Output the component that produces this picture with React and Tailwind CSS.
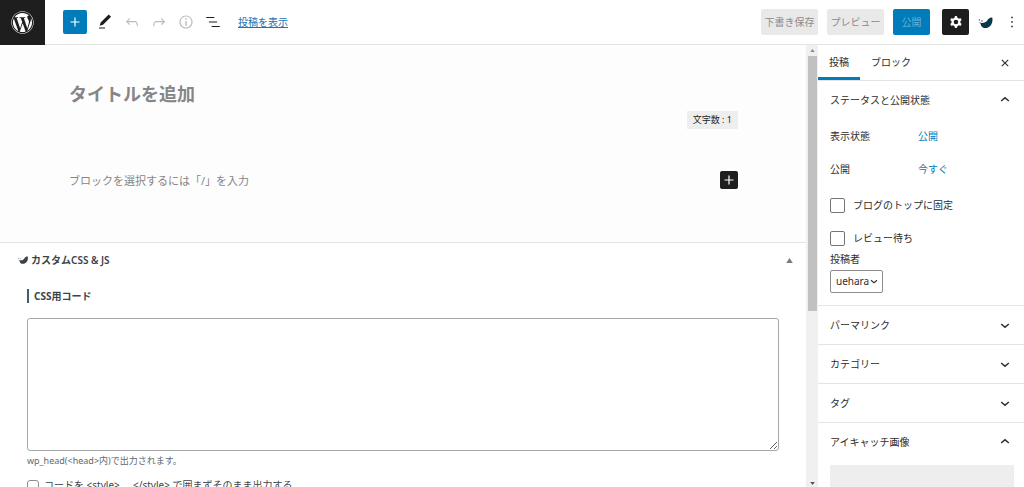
import { FaWordpress } from "react-icons/fa";

const paths = {
  plus: "M18 11.2h-5.2V6h-1.6v5.2H6v1.6h5.2V18h1.6v-5.2H18z",
  edit: "M20.1 5.1L16.9 2 6.2 12.7l-1.3 4.4 4.5-1.3L20.1 5.1zM4 20.8h8v-1.5H4v1.5z",
  undo: "M18.3 11.7c-.6-.6-1.4-.9-2.3-.9H6.7l2.9-3.3-1.1-1-4.5 5L8.5 16l1-1-2.7-2.7H16c.5 0 .9.2 1.3.5 1 1 1 3.4 1 4.5v.3h1.5v-.2c0-1.5 0-4.3-1.5-5.7z",
  redo: "M15.6 6.5l-1.1 1 2.9 3.3H8c-.9 0-1.7.3-2.3.9-1.4 1.5-1.4 4.2-1.4 5.6v.2h1.5v-.3c0-1.1 0-3.5 1-4.5.3-.3.7-.5 1.3-.5h9.2L14.5 15l1.1 1.1 4.6-4.6-4.6-5z",
  info: "M12 3.2c-4.8 0-8.8 3.9-8.8 8.8 0 4.8 3.9 8.8 8.8 8.8 4.8 0 8.8-3.9 8.8-8.8 0-4.8-4-8.8-8.8-8.8zm0 16c-4 0-7.2-3.3-7.2-7.2C4.8 8 8 4.8 12 4.8s7.2 3.3 7.2 7.2c0 4-3.2 7.2-7.2 7.2zM11 17h2v-6h-2v6zm0-8h2V7h-2v2z",
  list: "M13.8 5.2H3v1.5h10.8V5.2zm-3.6 12v1.5H21v-1.5H10.2zm7.2-6H6.6v1.5h10.8v-1.5z",
  cog: "M10.289 4.836A1 1 0 0111.275 4h1.306a1 1 0 01.987.836l.244 1.466c.787.26 1.503.679 2.108 1.218l1.393-.522a1 1 0 011.216.437l.653 1.13a1 1 0 01-.23 1.273l-1.148.944a6.025 6.025 0 010 2.435l1.149.946a1 1 0 01.23 1.272l-.653 1.13a1 1 0 01-1.216.437l-1.394-.522c-.605.54-1.32.958-2.108 1.218l-.244 1.466a1 1 0 01-.987.836h-1.306a1 1 0 01-.986-.836l-.244-1.466a5.995 5.995 0 01-2.108-1.218l-1.394.522a1 1 0 01-1.217-.436l-.653-1.131a1 1 0 01.23-1.272l1.149-.946a6.026 6.026 0 010-2.435l-1.148-.944a1 1 0 01-.23-1.272l.653-1.131a1 1 0 011.217-.437l1.393.522a5.994 5.994 0 012.108-1.218l.244-1.466zM14.929 12a3 3 0 11-6 0 3 3 0 016 0z",
  more: "M13 19h-2v-2h2v2zm0-6h-2v-2h2v2zm0-6h-2V5h2v2z",
  close: "M12 13.06l3.712 3.713 1.061-1.06L13.061 12l3.712-3.712-1.06-1.06L12 10.938 8.288 7.227l-1.061 1.06L10.939 12l-3.712 3.712 1.06 1.061L12 13.061z",
  down: "M17.7 11.4L12 16.2l-5.700-4.800 1.200-1.500L12 13.700l4.500-3.800 1.200 1.500z",
  up: "M6.300 12.600L12 7.800l5.700 4.800-1.200 1.500L12 10.300l-4.500 3.800-1.200-1.500z",
};

function Icon({ name, className = "size-[18px]" }) {
  return (
    <svg viewBox="0 0 24 24" className={className} fill="currentColor" fillRule="evenodd" aria-hidden="true">
      <path d={paths[name]} />
    </svg>
  );
}

function Bird({ className }) {
  return (
    <svg viewBox="0 0 44 34" className={className} fill="currentColor" aria-hidden="true">
      <circle cx="3" cy="9" r="2" />
      <circle cx="11" cy="12" r="2" />
      <path d="M2 16C12 21 22 18 28 10 32 4 37 1 43 2 46 17 38 34 22 34 12 34 7 27 7 20 5 19 3 18 2 16z" />
    </svg>
  );
}

function IconButton({ label, name, className = "", disabled }) {
  return (
    <button
      type="button"
      aria-label={label}
      disabled={disabled}
      className={`flex h-6 w-[27px] items-center justify-center disabled:text-[#bbb] ${className}`}
    >
      <Icon name={name} />
    </button>
  );
}

function Header() {
  return (
    <header className="flex h-[45px] shrink-0 items-center border-b border-[#e4e4e4]">
      <a href="#dashboard" aria-label="WordPress" className="flex h-[45px] w-[45px] items-center justify-center bg-[#1e1e1e] text-white">
        <FaWordpress className="size-[23px]" />
      </a>
      <div className="flex items-center pl-[18px]">
        <button type="button" aria-label="ブロックを追加" className="mr-1 flex size-6 items-center justify-center rounded-xs bg-[#007cba] text-white">
          <Icon name="plus" />
        </button>
        <IconButton label="編集" name="edit" />
        <IconButton label="元に戻す" name="undo" disabled />
        <IconButton label="やり直す" name="redo" disabled />
        <IconButton label="詳細" name="info" disabled />
        <IconButton label="リスト表示" name="list" />
        <a href="#view" className="ml-3 text-[#2271b1] underline">投稿を表示</a>
      </div>
      <div className="ml-auto flex items-center">
        <button type="button" disabled className="mr-[9px] h-[26px] w-[57px] rounded-xs bg-[#e9e9e9] text-[#8c8c8c]">下書き保存</button>
        <button type="button" disabled className="mr-[9px] h-[26px] w-[57px] rounded-xs bg-[#e9e9e9] text-[#8c8c8c]">プレビュー</button>
        <button type="button" disabled className="mr-3 h-[26px] w-[37px] rounded-xs bg-[#007cba] text-[#66b0d6]">公開</button>
        <button type="button" aria-label="設定" className="mr-[9px] flex h-[26px] w-[27px] items-center justify-center rounded-xs bg-[#1e1e1e] text-white">
          <Icon name="cog" />
        </button>
        <button type="button" aria-label="テーマ設定" className="mr-[10px] text-[#04384c]">
          <Bird className="h-[11px] w-[15px]" />
        </button>
        <button type="button" aria-label="オプション" className="mr-[3px]">
          <Icon name="more" />
        </button>
      </div>
    </header>
  );
}

function Editor() {
  return (
    <main className="min-w-0 flex-1 overflow-hidden">
      <section className="h-[198px] border-b border-[#e2e2e2] bg-[#fdfdfd] pl-[69px] pr-[68px] pt-[34px]">
        <input
          aria-label="タイトル"
          placeholder="タイトルを追加"
          className="block h-[30px] w-full text-[18px] font-bold outline-none placeholder:text-[#868686]"
        />
        <div className="mt-0.5 flex justify-end">
          <span className="flex h-[18px] items-center bg-[#eee] px-1.5 text-[9px] text-[#1e1e1e]">文字数 : 1</span>
        </div>
        <div className="mt-[41px] flex items-center">
          <input
            aria-label="ブロック"
            placeholder="ブロックを選択するには「/」を入力"
            className="h-5 min-w-0 flex-1 text-[11px] outline-none placeholder:text-[#868686]"
          />
          <button type="button" aria-label="ブロックを追加" className="flex size-[18px] items-center justify-center rounded-xs bg-[#1e1e1e] text-white">
            <Icon name="plus" />
          </button>
        </div>
      </section>
      <section className="text-[#3c434a]">
        <div className="flex h-[34px] items-center pl-[18px] pr-[13px]">
          <Bird className="mr-[3px] h-[8px] w-[10px]" />
          <h2 className="font-bold">カスタム<span className="font-semibold">CSS &amp; JS</span></h2>
          <button type="button" aria-label="パネルを切り替え" className="ml-auto text-[#787c82]">
            <svg viewBox="0 0 8 6" className="h-[5px] w-[7px]" fill="currentColor" aria-hidden="true"><path d="M4 0l4 6H0z" /></svg>
          </button>
        </div>
        <div className="px-[27px] pt-3">
          <label htmlFor="css-code" className="block h-[14px] border-l-2 border-[#3d5f70] pl-[5px] leading-[14px] font-bold">CSS用コード</label>
          <textarea id="css-code" className="mt-[15px] block h-[133px] w-full resize-y rounded-[3px] border border-[#a5a7aa] bg-white outline-none" />
          <p className="mt-[3px] text-[9px] leading-[14px] text-[#646970]">wp_head(&lt;head&gt;内)で出力されます。</p>
          <label className="mt-[10px] flex items-center gap-[5px]">
            <input type="checkbox" className="size-3 appearance-none rounded-[3px] border border-[#8c8f94]" />
            コードを &lt;style&gt; ... &lt;/style&gt; で囲まずそのまま出力する
          </label>
        </div>
      </section>
    </main>
  );
}

function ScrollTrack() {
  return (
    <div aria-hidden="true" className="flex w-3 shrink-0 flex-col items-center bg-[#f0f0f0]">
      <svg viewBox="0 0 6 4" className="my-1 h-[3px] w-[5px]" fill="#8a8a8a"><path d="M3 0l3 4H0z" /></svg>
      <div className="h-[255px] w-[9px] bg-[#c1c1c1]" />
      <svg viewBox="0 0 6 4" className="mt-auto mb-0.5 h-[3px] w-[5px]" fill="#505050"><path d="M3 4l3-4H0z" /></svg>
    </div>
  );
}

function PanelTitle({ title, open }) {
  return (
    <h2>
      <button type="button" aria-expanded={open} className="flex h-[38px] w-full items-center justify-between pl-3 pr-[10px]">
        {title}
        <Icon name={open ? "up" : "down"} />
      </button>
    </h2>
  );
}

function Check({ label }) {
  return (
    <label className="flex items-center gap-2">
      <input type="checkbox" className="size-[15px] appearance-none rounded-xs border border-[#757575]" />
      {label}
    </label>
  );
}

function Sidebar() {
  return (
    <aside className="w-[206px] shrink-0 overflow-hidden text-[#2c2c2c]">
      <div role="tablist" className="flex h-9 items-stretch border-b border-[#e4e4e4]">
        <button type="button" role="tab" aria-selected="true" className="w-[42px] border-b-3 border-[#007cba] pt-0.5">投稿</button>
        <button type="button" role="tab" aria-selected="false" className="w-[62px] border-b-3 border-transparent pt-0.5">ブロック</button>
        <button type="button" aria-label="設定を閉じる" className="ml-auto mr-[10px]">
          <Icon name="close" />
        </button>
      </div>
      <section className="border-b border-[#e4e4e4] pb-3">
        <PanelTitle title="ステータスと公開状態" open />
        <div className="px-3">
          <dl className="grid grid-cols-[88px_1fr] gap-y-[13px] pt-[7px] leading-5">
            <dt>表示状態</dt>
            <dd><button type="button" className="text-[#007cba]">公開</button></dd>
            <dt>公開</dt>
            <dd><button type="button" className="text-[#007cba]">今すぐ</button></dd>
          </dl>
          <div className="mt-[19px] flex flex-col gap-[18px]">
            <Check label="ブログのトップに固定" />
            <Check label="レビュー待ち" />
          </div>
          <label htmlFor="author" className="mt-[6px] block leading-[15px]">投稿者</label>
          <div className="relative mt-[3px] w-[53px]">
            <select id="author" className="block h-[23px] w-full appearance-none rounded-xs border border-[#8c8c8c] bg-white pl-[5px]">
              <option>uehara</option>
            </select>
            <Icon name="down" className="pointer-events-none absolute right-0.5 top-1 size-[14px]" />
          </div>
        </div>
      </section>
      {["パーマリンク", "カテゴリー", "タグ"].map((title) => (
        <section key={title} className="border-b border-[#e4e4e4]">
          <PanelTitle title={title} open={false} />
        </section>
      ))}
      <section>
        <PanelTitle title="アイキャッチ画像" open />
        <div className="pl-3 pr-[10px] pt-1">
          <button type="button" aria-label="アイキャッチ画像を設定" className="block h-20 w-full bg-[#eee]" />
        </div>
      </section>
    </aside>
  );
}

export default function App() {
  return (
    <div className="flex h-screen flex-col overflow-hidden bg-white font-['Noto_Sans','Noto_Sans_CJK_JP',sans-serif] text-[10px] text-[#1e1e1e]">
      <Header />
      <div className="flex min-h-0 flex-1">
        <Editor />
        <ScrollTrack />
        <Sidebar />
      </div>
    </div>
  );
}
